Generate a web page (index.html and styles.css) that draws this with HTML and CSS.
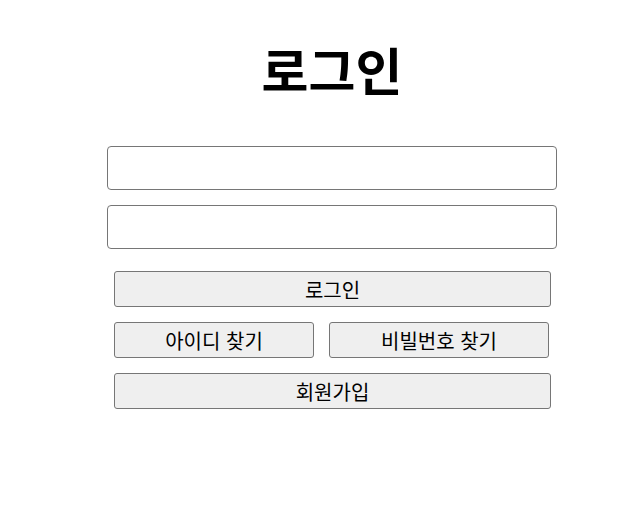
FILE: index.html
```html
<!DOCTYPE html>
<html lang="ko">
<head>
  <meta charset="UTF-8">
  <meta name="viewport" content="width=device-width, initial-scale=1">
  <title>로그인</title>
  <link rel="stylesheet" href="styles.css">
</head>
<body>
  <div class="login">
    <h1 class="title">로그인</h1>
    <form class="form" onsubmit="return false">
      <input class="field" type="text">
      <input class="field" type="password">
      <div class="actions">
        <button class="btn">로그인</button>
        <div class="row">
          <button class="btn btn-id">아이디 찾기</button>
          <button class="btn btn-pw">비빌번호 찾기</button>
        </div>
        <button class="btn">회원가입</button>
      </div>
    </form>
  </div>
</body>
</html>
```

FILE: styles.css
```css
* { margin: 0; padding: 0; box-sizing: border-box; }
body {
  font-family: "Noto Sans CJK KR", "Noto Sans", sans-serif;
  background: #fff;
  color: #000;
}
.login {
  width: 450px;
  margin-left: 107px;
  padding-top: 34px;
}
.title {
  text-align: center;
  font-size: 51px;
  font-weight: bold;
  line-height: 70px;
  margin-bottom: 42px;
}
.form {
  display: flex;
  flex-direction: column;
  gap: 15px;
}
.field {
  width: 450px;
  height: 44px;
  border: 1px solid #767676;
  border-radius: 4px;
  background: #fff;
  font-size: 16px;
  padding: 0 10px;
}
.actions {
  display: flex;
  flex-direction: column;
  gap: 15px;
  width: 437px;
  margin-left: 7px;
  margin-top: 7px;
}
.row {
  display: flex;
  gap: 15px;
}
.btn {
  height: 36px;
  border: 1px solid #767676;
  border-radius: 3px;
  background: #efefef;
  color: #000;
  font-family: inherit;
  font-size: 20px;
  cursor: pointer;
}
.btn-id { width: 200px; }
.btn-pw { width: 220px; }
```
